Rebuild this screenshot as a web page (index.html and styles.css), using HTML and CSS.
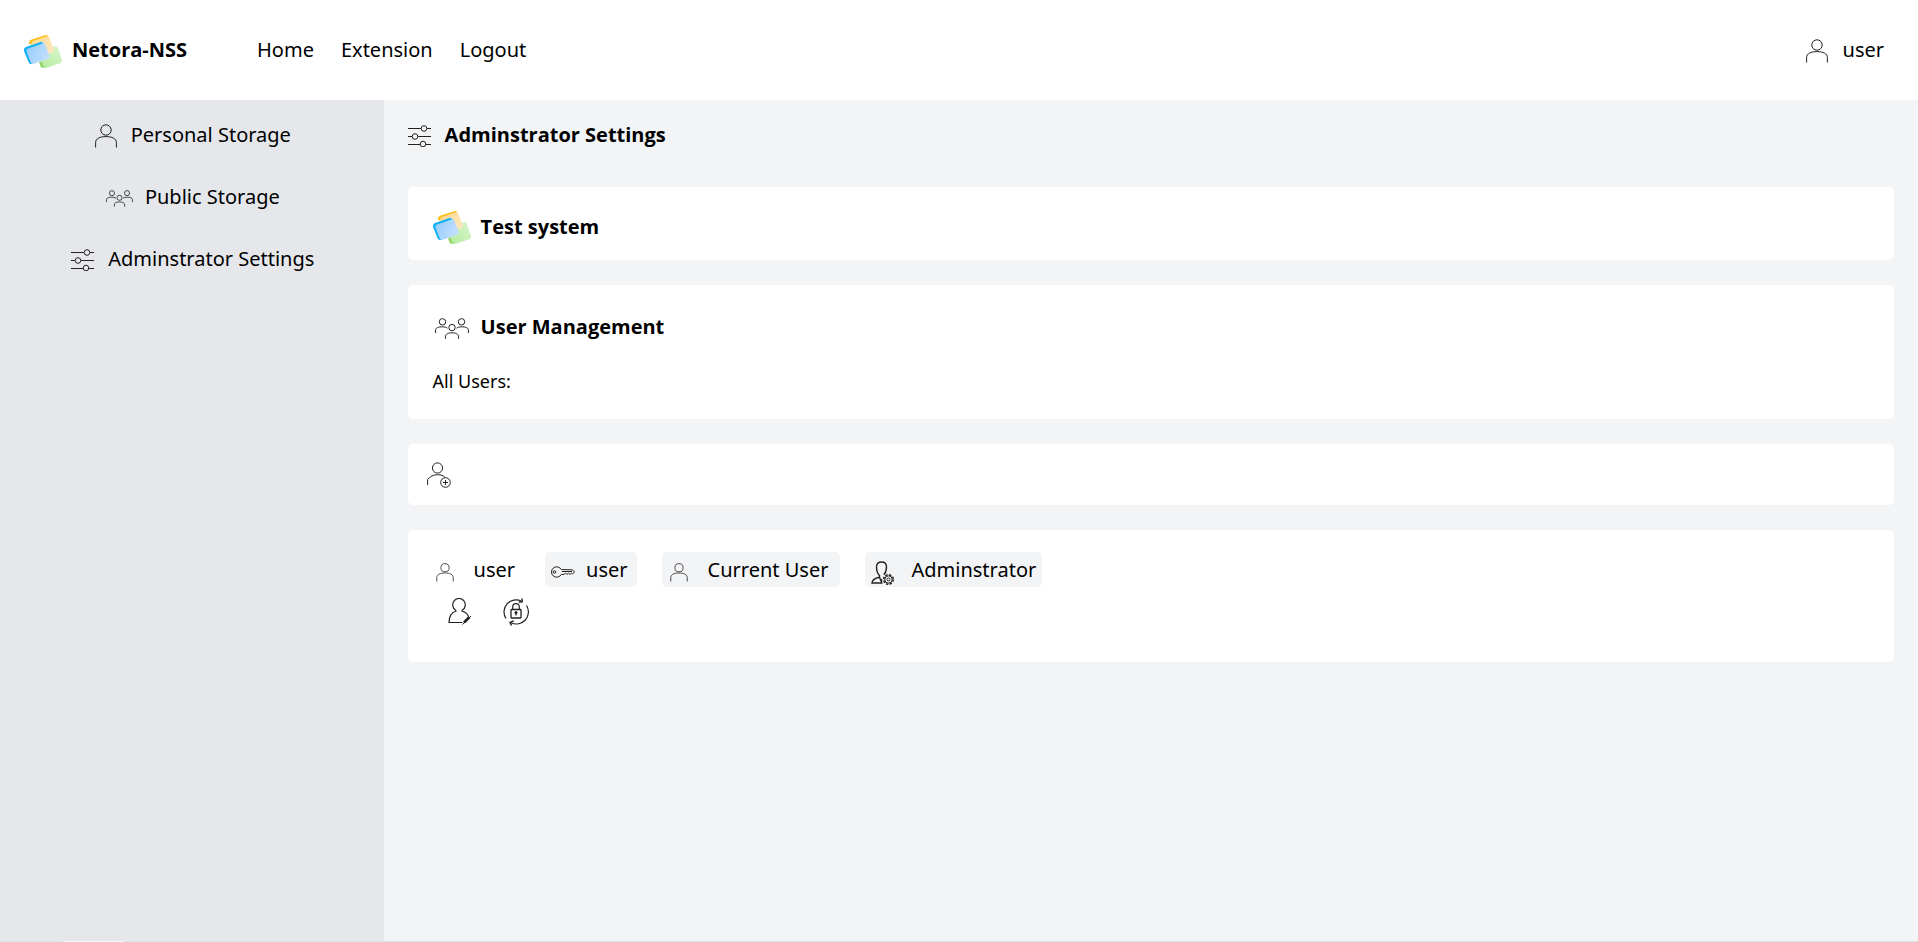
FILE: index.html
```html
<!DOCTYPE html>
<html lang="en">
<head>
<meta charset="utf-8">
<title>Netora-NSS</title>
<link rel="stylesheet" href="styles.css">
</head>
<body>
<svg class="defs" aria-hidden="true">
  <defs>
    <linearGradient id="blue" x1="0" y1="0.3" x2="1" y2="0.7"><stop offset="0" stop-color="#93cbfc"/><stop offset="1" stop-color="#c6e0fd"/></linearGradient>
    <linearGradient id="gold" x1="0" y1="0" x2="1" y2="1"><stop offset="0" stop-color="#ffd98a"/><stop offset="1" stop-color="#fee9c8"/></linearGradient>
    <linearGradient id="green" x1="0" y1="1" x2="1" y2="0"><stop offset="0" stop-color="#b3ec9c"/><stop offset="1" stop-color="#d9f5cf"/></linearGradient>
    <symbol id="logo" viewBox="0 0 38 33">
      <path d="M17 15 32 11Q33 11 34 13L38 25Q38 27 37 28L22 33Q20 33 19 31L15 19Z" fill="url(#green)"/>
      <path d="M15 27 16.500 31.500Q17.500 33.500 20 32.500L22 32Q20 32 19 30L17.500 26Z" fill="#92d86b"/>
      <path d="M6 5.500 22 .3Q24-.3 25 2L30 15Q30 17 28 17.500L12 22Z" fill="url(#gold)"/>
      <path d="M5 9 5 7.500Q5 5.500 7 4.800L21 .2Q23-.4 24 1L9 6Q7 7 7.500 9.500Z" fill="#ffc01e"/>
      <path d="M2 12.500 17 7.200Q20 6.500 21 9L25.500 20Q26 23 24 24L9 29Q6 30 5 27L0 16Q0 13 2 12.500Z" fill="url(#blue)"/>
      <path d="M18.500 8.500Q18.500 6.500 16 7.200L2 12Q-.5 13 .2 16L4.500 27Q5.500 29.500 8 29L6.500 27 2.500 16.500Q2 14.500 4 13.500Z" fill="#0db0f2"/>
    </symbol>
    <symbol id="person" viewBox="0 0 22 24">
      <circle cx="11" cy="6" r="5.200"/><path d="M.6 23.500V18.500C.6 14.500 5 12.600 11 12.600S21.400 14.500 21.400 18.500V23.500"/>
    </symbol>
    <symbol id="people" viewBox="0 0 34 21">
      <circle cx="7.500" cy="3.800" r="3.200"/><circle cx="26.500" cy="3.800" r="3.200"/><circle cx="17" cy="9.600" r="3.200"/>
      <path d="M.6 15V12C.6 9.800 3.500 8.800 7.500 8.800 9.500 8.800 11 9.200 12.500 10.200M33.400 15V12C33.400 9.800 30.500 8.800 26.500 8.800 24.500 8.800 23 9.200 21.500 10.200M10.500 20.800V18.500C10.500 16 13 14.800 17 14.800S23.500 16 23.500 18.500V20.800"/>
    </symbol>
    <symbol id="sliders" viewBox="0 0 23 22">
      <path d="M0 3.500H13M19 3.500H23M0 11.500H4M10 11.500H23M0 19.500H12M18 19.500H23"/>
      <circle cx="16" cy="3.500" r="2.800"/><circle cx="7" cy="11.500" r="2.800"/><circle cx="15" cy="19" r="2.800"/>
    </symbol>
    <symbol id="person-add" viewBox="0 0 24 26">
      <circle cx="10.500" cy="6" r="5.100"/><path d="M.6 23V17.500C3 14.500 6.500 12.700 10.500 12.700 14 12.700 16.500 13.500 18 15.500"/>
      <circle cx="18.500" cy="20.500" r="4.800"/><path d="M16 20.500H21M18.500 18V23"/>
    </symbol>
    <symbol id="key" viewBox="0 0 24 12">
      <path d="M10.300 3.600A5.200 5.200 0 1 0 10.300 8.400H13L14.500 7.200 16 8.400 17.500 7.200 19 8.400 20.500 7.200 21.500 8 23.500 6 21.500 3.800ZM11 5.500H21"/>
      <circle cx="3.500" cy="6" r="1.300"/>
    </symbol>
    <symbol id="admin" viewBox="0 0 24 24">
      <path d="M8.500 16.500V14.500C6 12 5.500 9 5.500 6 5.500 2.500 7.500 1 10.500 1S15.500 2.500 15.500 6C15.500 9 15 11.500 12.800 13.800M8.500 16.200C4 17 1.200 18.500 1 22H11.500M8.500 16.500 11 22M10.500 18V22" stroke-width="1.400"/>
      <circle cx="17.500" cy="18.500" r="4.800" stroke-width="1.600" stroke-dasharray="2.300 1.470"/><circle cx="17.500" cy="18.500" r="3.700"/><circle cx="17.500" cy="18.500" r="1.500"/>
    </symbol>
    <symbol id="edit" viewBox="0 0 24 27">
      <path d="M7.500 12A6.300 6.300 0 1 1 14.500 12L14 13C17 14 19.500 16 20.500 18.500M7.500 12 8 13C3.500 14.500 1 17.500 1 24.500H14.500" stroke-width="1.200"/>
      <path d="M16 24.500 21.500 19" stroke-width="2.600"/><path d="M14.500 26.500 23 18" stroke-width="1"/>
    </symbol>
    <symbol id="reset" viewBox="0 0 26 28">
      <path d="M3 20.500A12 12 0 0 1 18.500 3.200M23.500 7.500A12 12 0 0 1 8 24.700" stroke-width="1.200"/>
      <path d="M15.800 4.200 19.300 3.700 19 .5M10.800 22.800 7 24.300 8.500 27.500" stroke-width="1.400"/>
      <rect x="8" y="11.500" width="10" height="8.500" rx=".5" stroke-width="1.300"/><path d="M9.700 11.500V9A3.300 3.300 0 0 1 16.300 9V11.500M13 15V17.500" stroke-width="1.200"/><circle cx="13" cy="14.700" r="1.100" fill="#111"/>
    </symbol>
  </defs>
</svg>
<header class="topbar">
  <div class="brand"><svg class="logo"><use href="#logo"/></svg><strong>Netora-NSS</strong></div>
  <nav class="menu"><a href="#">Home</a><a href="#">Extension</a><a href="#">Logout</a></nav>
  <a class="account" href="#"><svg class="icon person"><use href="#person"/></svg>user</a>
</header>
<div class="layout">
  <nav class="sidebar">
    <a href="#"><svg class="icon person"><use href="#person"/></svg>Personal Storage</a>
    <a class="public" href="#"><svg class="icon people-small"><use href="#people"/></svg>Public Storage</a>
    <a href="#"><svg class="icon sliders"><use href="#sliders"/></svg>Adminstrator Settings</a>
  </nav>
  <main class="content">
    <h1 class="title"><svg class="icon sliders"><use href="#sliders"/></svg>Adminstrator Settings</h1>
    <section class="card system"><h2><svg class="logo"><use href="#logo"/></svg>Test system</h2></section>
    <section class="card management">
      <h2><span class="lead"><svg class="icon people"><use href="#people"/></svg></span>User Management</h2>
      <p>All Users:</p>
    </section>
    <section class="card toolbar">
      <button type="button" aria-label="Add user"><svg class="icon add"><use href="#person-add"/></svg></button>
    </section>
    <section class="card member">
      <div class="facts">
        <span class="name"><svg class="icon person-small"><use href="#person"/></svg>user</span>
        <span class="chip key-chip"><svg class="icon key"><use href="#key"/></svg>user</span>
        <span class="chip current-chip"><svg class="icon person-small"><use href="#person"/></svg>Current User</span>
        <span class="chip admin-chip"><svg class="icon admin"><use href="#admin"/></svg>Adminstrator</span>
      </div>
      <div class="actions">
        <button type="button" aria-label="Edit user"><svg class="icon edit"><use href="#edit"/></svg></button>
        <button type="button" aria-label="Reset password"><svg class="icon reset"><use href="#reset"/></svg></button>
      </div>
    </section>
  </main>
</div>
<footer class="edge"></footer>
</body>
</html>
```
FILE: styles.css
```css
* { box-sizing: border-box; }
body {
  margin: 0;
  min-height: 100vh;
  display: flex;
  flex-direction: column;
  background: #f3f4f6;
  color: #000;
  font: 20px/28px "Noto Sans", "Open Sans", sans-serif;
}
a { color: inherit; text-decoration: none; }
h1, h2, p { margin: 0; }
h1, h2, strong { font-size: 20px; font-weight: 700; font-family: "Open Sans", sans-serif; }
button { padding: 0; border: 0; background: none; cursor: pointer; display: flex; }
.defs { position: absolute; width: 0; height: 0; }
svg { flex: none; display: block; }
.icon { fill: none; stroke: #222; stroke-width: 1; margin-top: 2px; }
.logo { width: 38px; height: 33px; margin-top: 2px; }
.person { width: 22px; height: 24px; }
.person-small { width: 18px; height: 19px; }
.people { width: 34px; height: 21px; }
.people-small { width: 27px; height: 17px; }
.sliders { width: 23px; height: 22px; }
.add { width: 24px; height: 26px; margin: 0; }
.key { width: 24px; height: 12px; }
.admin { width: 24px; height: 24px; }
.edit { width: 24px; height: 27px; margin: 0; }
.reset { width: 26px; height: 28px; margin: 0; }

.topbar { height: 100px; padding: 0 34px 0 24px; display: flex; align-items: center; background: #fff; }
.brand { display: flex; align-items: center; gap: 10px; }
.menu { display: flex; gap: 27px; margin-left: 70px; }
.account { display: flex; align-items: center; gap: 15px; margin-left: auto; }

.layout { flex: 1; display: flex; }
.sidebar { width: 20%; background: #e5e7eb; padding: 4px 0 0 2px; }
.sidebar a { display: flex; height: 62px; align-items: center; justify-content: center; gap: 14px; }
.sidebar .public { gap: 12px; }
.content { flex: 1; padding: 21px 24px 0; }
.title { display: flex; align-items: center; gap: 14px; margin-bottom: 38px; }
.card { background: #fff; border-radius: 5px; margin-bottom: 25px; padding: 20px 25px; }
.card h2 { display: flex; align-items: center; gap: 10px; }
.lead { width: 38px; display: flex; justify-content: center; }
.system { padding: 22px 25px 16px; }
.management { padding: 28px 25px 24px; }
.management p { margin-top: 26px; font-size: 18px; }
.toolbar { padding: 18px 19px 17px; }
.member { padding: 22px 25px 36px 28px; }
.facts { display: flex; gap: 25px; }
.facts span { display: flex; align-items: center; height: 35px; }
.facts .person-small, .facts .key { margin-top: 5px; }
.name { gap: 20px; padding-right: 5px; }
.chip { background: #f3f4f6; border-radius: 5px; padding: 0 9px 0 6px; gap: 11px; }
.current-chip { gap: 20px; padding: 0 12px 0 8px; }
.admin-chip { gap: 16px; padding-right: 6px; }
.admin-chip .admin { margin-top: 7px; }
.actions { display: flex; gap: 31px; padding: 11px 0 0 12px; }
.edge { height: 1px; background: linear-gradient(90deg, #d9e4e8 63px, #f3f7f8 63px 124px, #d9e4e8 124px); }
```
